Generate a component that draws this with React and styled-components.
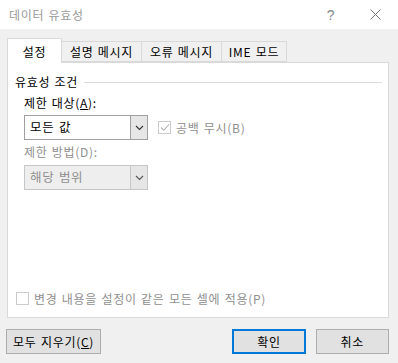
import React from "react";
import styled, { createGlobalStyle } from "styled-components";

const Global = createGlobalStyle`
  html, body { margin: 0; padding: 0; background: #f0f0f0; }
  body {
    font-family: "Noto Sans CJK KR", "Noto Sans", sans-serif;
    font-size: 12px;
    letter-spacing: 0.7px;
    word-spacing: 1px;
  }
`;

const Window = styled.div`
  width: 398px;
  height: 363px;
  background: #f0f0f0;
  display: flex;
  flex-direction: column;
  box-sizing: border-box;
  overflow: hidden;
`;

const TitleBar = styled.div`
  height: 29px;
  background: #ffffff;
  display: flex;
  align-items: center;
  padding-left: 9px;
  color: #999999;
  font-size: 12px;
  line-height: 1;
`;

const Title = styled.span`
  flex: 1;
`;

const TitleButton = styled.div`
  width: ${(p) => p.$w}px;
  height: 29px;
  display: flex;
  align-items: center;
  justify-content: center;
  color: #888;
  font-family: "Liberation Sans", sans-serif;
  font-size: 14px;
`;

const Body = styled.div`
  flex: 1;
  padding: 9px 9px 0 7px;
  display: flex;
  flex-direction: column;
`;

const TabStrip = styled.div`
  display: flex;
  align-items: flex-end;
  height: 24px;
  position: relative;
  z-index: 1;
`;

const Tab = styled.div`
  box-sizing: border-box;
  width: ${(p) => p.$w}px;
  height: ${(p) => (p.$active ? 25 : 21)}px;
  margin-bottom: ${(p) => (p.$active ? -1 : 0)}px;
  background: ${(p) => (p.$active ? "#ffffff" : "#f0f0f0")};
  border: 1px solid #d9d9d9;
  border-bottom: ${(p) => (p.$active ? "none" : "1px solid #d9d9d9")};
  border-left: ${(p) => (p.$first || p.$active ? "1px solid #d9d9d9" : "none")};
  display: flex;
  align-items: center;
  justify-content: center;
  padding-top: ${(p) => (p.$active ? 1 : 0)}px;
  color: #000;
  font-size: 12px;
  line-height: 1;
  white-space: nowrap;
`;

const Panel = styled.div`
  box-sizing: border-box;
  height: 256px;
  background: #ffffff;
  border: 1px solid #d9d9d9;
  padding: 10px 6px 0 7px;
  display: flex;
  flex-direction: column;
`;

const GroupHeader = styled.div`
  display: flex;
  align-items: center;
  height: 16px;
  gap: 6px;
  color: #000;
  line-height: 1;
  margin-top: 1px;
`;

const GroupLine = styled.div`
  flex: 1;
  height: 1px;
  background: #dcdcdc;
`;

const Group = styled.div`
  padding-left: 9px;
  display: flex;
  flex-direction: column;
`;

const Label = styled.div`
  color: ${(p) => (p.$disabled ? "#8f8f8f" : "#000")};
  line-height: 1;
  height: 14px;
  margin-top: ${(p) => p.$mt}px;
  display: flex;
  align-items: center;
`;

const U = styled.span`
  text-decoration: underline;
  text-underline-offset: 1px;
`;

const FieldRow = styled.div`
  display: flex;
  align-items: center;
  margin-top: ${(p) => p.$mt}px;
  gap: 10px;
`;

const Combo = styled.div`
  box-sizing: border-box;
  width: 124px;
  height: 25px;
  display: flex;
  border: 1px solid ${(p) => (p.$disabled ? "#c6c6c6" : "#a0a0a0")};
  background: ${(p) => (p.$disabled ? "#eeeeee" : "#ffffff")};
`;

const ComboText = styled.div`
  flex: 1;
  display: flex;
  align-items: center;
  padding-left: 5px;
  font-size: 12.5px;
  color: ${(p) => (p.$disabled ? "#8f8f8f" : "#000")};
  line-height: 1;
`;

const ComboButton = styled.div`
  width: 16px;
  border-left: 1px solid ${(p) => (p.$disabled ? "#c6c6c6" : "#a0a0a0")};
  background: #e6e6e6;
  display: flex;
  align-items: center;
  justify-content: center;
`;

const Check = styled.div`
  display: flex;
  align-items: center;
  gap: 5px;
  color: #8f8f8f;
  line-height: 1;
  white-space: nowrap;
`;

const Box = styled.div`
  box-sizing: border-box;
  width: 13px;
  height: 13px;
  border: 1px solid #cccccc;
  background: #ffffff;
  display: flex;
  align-items: center;
  justify-content: center;
`;

const Spacer = styled.div`
  flex: 1;
`;

const BottomCheck = styled.div`
  padding-left: 1px;
  margin-bottom: 12px;
`;

const ButtonRow = styled.div`
  display: flex;
  align-items: center;
  margin-top: 11px;
  margin-left: -1px;
`;

const Button = styled.div`
  box-sizing: border-box;
  width: ${(p) => p.$w}px;
  height: 25px;
  margin-left: ${(p) => p.$ml || 0}px;
  background: #e1e1e1;
  border: ${(p) => (p.$default ? "2px solid #0078d7" : "1px solid #adadad")};
  display: flex;
  align-items: center;
  justify-content: center;
  color: #000;
  line-height: 1;
  font-size: 12px;
  white-space: nowrap;
`;

const Chevron = ({ color = "#333" }) => (
  <svg width="9" height="6" viewBox="0 0 9 6">
    <polyline points="1,1 4.5,4.5 8,1" fill="none" stroke={color} strokeWidth="1.1" />
  </svg>
);

export default function App() {
  return (
    <>
      <Global />
      <Window>
        <TitleBar>
          <Title>데이터 유효성</Title>
          <TitleButton $w={44}>?</TitleButton>
          <TitleButton $w={45}>
            <svg width="11" height="11" viewBox="0 0 11 11">
              <path d="M0.5 0.5 L10.5 10.5 M10.5 0.5 L0.5 10.5" stroke="#777" strokeWidth="1" />
            </svg>
          </TitleButton>
        </TitleBar>
        <Body>
          <TabStrip>
            <Tab $w={55} $active $first>설정</Tab>
            <Tab $w={80}>설명 메시지</Tab>
            <Tab $w={80}>오류 메시지</Tab>
            <Tab $w={65}>IME 모드</Tab>
          </TabStrip>
          <Panel>
            <GroupHeader>
              <span>유효성 조건</span>
              <GroupLine />
            </GroupHeader>
            <Group>
              <Label $mt={6}>
                제한 대상(<U>A</U>):
              </Label>
              <FieldRow $mt={5}>
                <Combo>
                  <ComboText>모든 값</ComboText>
                  <ComboButton>
                    <Chevron />
                  </ComboButton>
                </Combo>
                <Check>
                  <Box>
                    <svg width="10" height="9" viewBox="0 0 10 9">
                      <polyline points="1,4.5 3.8,7.3 9,1.5" fill="none" stroke="#b0b0b0" strokeWidth="1.1" />
                    </svg>
                  </Box>
                  <span>공백 무시(B)</span>
                </Check>
              </FieldRow>
              <Label $mt={5} $disabled>
                제한 방법(D):
              </Label>
              <FieldRow $mt={6}>
                <Combo $disabled>
                  <ComboText $disabled>해당 범위</ComboText>
                  <ComboButton $disabled>
                    <Chevron color="#555" />
                  </ComboButton>
                </Combo>
              </FieldRow>
            </Group>
            <Spacer />
            <BottomCheck>
              <Check>
                <Box />
                <span>변경 내용을 설정이 같은 모든 셀에 적용(P)</span>
              </Check>
            </BottomCheck>
          </Panel>
          <ButtonRow>
            <Button $w={96}>
              모두 지우기(<U>C</U>)
            </Button>
            <Button $w={74} $ml={131} $default>
              확인
            </Button>
            <Button $w={74} $ml={10}>
              취소
            </Button>
          </ButtonRow>
        </Body>
      </Window>
    </>
  );
}
